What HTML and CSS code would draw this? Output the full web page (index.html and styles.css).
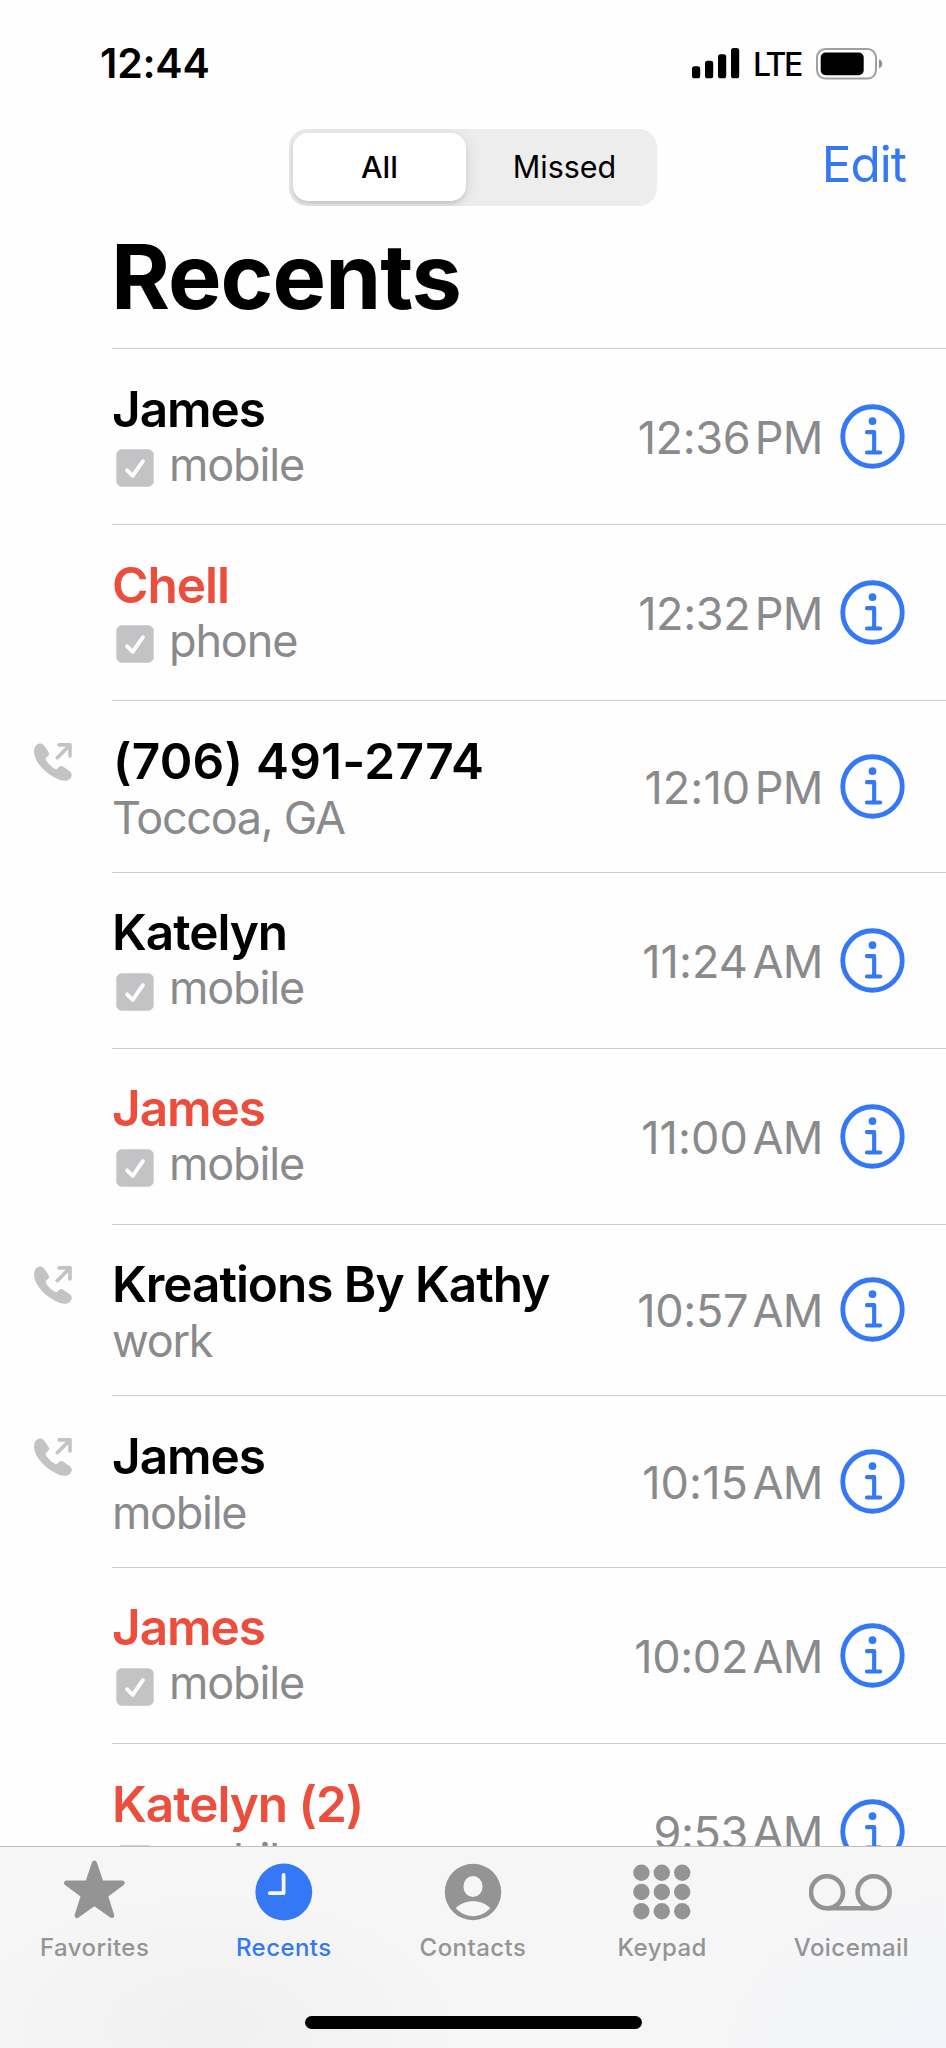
FILE: index.html
```
<!DOCTYPE html>
<html lang="en">
<head>
<meta charset="utf-8">
<title>Recents</title>
<link rel="stylesheet" href="styles.css">
</head>
<body>
<svg class="defs" aria-hidden="true">
  <symbol id="info" viewBox="0 0 66 66">
    <circle cx="33" cy="33" r="30.2" fill="none" stroke="currentColor" stroke-width="4.9"/>
    <circle cx="33" cy="17.4" r="3.9" fill="currentColor"/>
    <path d="M27.400 28.600H34.700V49.200M27.400 49.200H40.800" fill="none" stroke="currentColor" stroke-width="4.200" stroke-linecap="round" stroke-linejoin="round"/>
  </symbol>
  <symbol id="check" viewBox="0 0 38 38">
    <rect x="0.3" y="0.3" width="37.4" height="37.4" rx="5.5" fill="#c3c3c5"/>
    <path d="M11.2 21.3L16.7 26.8L26.9 12.2" fill="none" stroke="#fff" stroke-width="3.9" stroke-linecap="round" stroke-linejoin="round"/>
  </symbol>
  <symbol id="outgoing" viewBox="0 0 38 38">
    <path d="M2.2 2.2C4.6-.2 8-.1 10 2.4C12 5 13.8 7.500 14.900 9.700C15.900 12 13.300 13.300 12.100 14.800C11.300 16 12 17.200 13.200 18.900C15.100 21.300 17.500 23.700 19.900 25.300C21.500 26.400 22.700 26.500 23.800 25.300C25 24 26.400 22.300 28.700 23.500C31 24.700 33.500 26.500 35.800 28.300C38.200 30.300 38.400 33 36.400 35.400C34 37.800 30.500 38.300 26 37C19.500 34.500 12.800 30.200 8 25C3.800 20.300 1 15.500 .2 11C-.3 7.500 .3 4 2.200 2.200Z" fill="#c3c3c5"/>
    <path d="M25 1.900H36V13M36 1.900L23.300 14.700" fill="none" stroke="#c3c3c5" stroke-width="3.600" stroke-linecap="round" stroke-linejoin="round"/>
  </symbol>
</svg>

<div class="phone">
  <header class="status">
    <span class="clock">12:44</span>
    <div class="indicators">
      <svg width="48" height="31" viewBox="0 0 48 31">
        <rect x="0" y="18.300" width="8.200" height="12" rx="2.600"/>
        <rect x="13" y="12.800" width="8.200" height="17.500" rx="2.600"/>
        <rect x="26" y="6.300" width="8.200" height="24" rx="2.600"/>
        <rect x="39" y="0" width="8.200" height="30.300" rx="2.600"/>
      </svg>
      <span class="network">LTE</span>
      <svg class="battery" width="67" height="32" viewBox="0 0 67 32">
        <rect x="1" y="1" width="59" height="29.600" rx="8.500" fill="none" stroke="#a0a0a0" stroke-width="2"/>
        <rect x="4.700" y="4.500" width="43" height="22.700" rx="5"/>
        <path d="M63 11.200C67.300 12.600 67.300 19 63 20.400Z" fill="#8e8e8e"/>
      </svg>
    </div>
  </header>

  <nav class="toolbar">
    <div class="segmented">
      <button class="segment segment-on">All</button>
      <button class="segment segment-off">Missed</button>
    </div>
    <a class="edit">Edit</a>
  </nav>

  <h1 class="title">Recents</h1>

  <main class="calls">
    <article class="call">
      <div class="direction"></div>
      <div class="entry">
        <div class="who"><h2 class="name">James</h2><p class="detail"><svg class="box"><use href="#check"/></svg>mobile</p></div>
        <time class="time">12:36<span class="meridian">&#8239;PM</span></time><svg class="info"><use href="#info"/></svg>
      </div>
    </article>
    <article class="call">
      <div class="direction"></div>
      <div class="entry">
        <div class="who"><h2 class="name missed">Chell</h2><p class="detail"><svg class="box"><use href="#check"/></svg>phone</p></div>
        <time class="time">12:32<span class="meridian">&#8239;PM</span></time><svg class="info"><use href="#info"/></svg>
      </div>
    </article>
    <article class="call call-short">
      <div class="direction"><svg class="arrow"><use href="#outgoing"/></svg></div>
      <div class="entry">
        <div class="who"><h2 class="name number">(706) 491-2774</h2><p class="detail">Toccoa, GA</p></div>
        <time class="time time-wide">12:10<span class="meridian">&#8239;PM</span></time><svg class="info"><use href="#info"/></svg>
      </div>
    </article>
    <article class="call">
      <div class="direction"></div>
      <div class="entry">
        <div class="who"><h2 class="name">Katelyn</h2><p class="detail"><svg class="box"><use href="#check"/></svg>mobile</p></div>
        <time class="time time-wide">11:24<span class="meridian">&#8239;AM</span></time><svg class="info"><use href="#info"/></svg>
      </div>
    </article>
    <article class="call">
      <div class="direction"></div>
      <div class="entry">
        <div class="who"><h2 class="name missed">James</h2><p class="detail"><svg class="box"><use href="#check"/></svg>mobile</p></div>
        <time class="time time-wide">11:00<span class="meridian">&#8239;AM</span></time><svg class="info"><use href="#info"/></svg>
      </div>
    </article>
    <article class="call call-short">
      <div class="direction"><svg class="arrow"><use href="#outgoing"/></svg></div>
      <div class="entry">
        <div class="who"><h2 class="name">Kreations By Kathy</h2><p class="detail">work</p></div>
        <time class="time">10:57<span class="meridian">&#8239;AM</span></time><svg class="info"><use href="#info"/></svg>
      </div>
    </article>
    <article class="call call-short">
      <div class="direction"><svg class="arrow"><use href="#outgoing"/></svg></div>
      <div class="entry">
        <div class="who"><h2 class="name">James</h2><p class="detail">mobile</p></div>
        <time class="time time-wide">10:15<span class="meridian">&#8239;AM</span></time><svg class="info"><use href="#info"/></svg>
      </div>
    </article>
    <article class="call">
      <div class="direction"></div>
      <div class="entry">
        <div class="who"><h2 class="name missed">James</h2><p class="detail"><svg class="box"><use href="#check"/></svg>mobile</p></div>
        <time class="time">10:02<span class="meridian">&#8239;AM</span></time><svg class="info"><use href="#info"/></svg>
      </div>
    </article>
    <article class="call">
      <div class="direction"></div>
      <div class="entry">
        <div class="who"><h2 class="name missed">Katelyn (2)</h2><p class="detail"><svg class="box"><use href="#check"/></svg>mobile</p></div>
        <time class="time">9:53<span class="meridian">&#8239;AM</span></time><svg class="info"><use href="#info"/></svg>
      </div>
    </article>
  </main>

  <footer class="dock">
    <div class="tabs">
      <a class="tab">
        <svg width="84" height="64" viewBox="0 0 84 64">
          <path d="M41.400 5L48.200 25H69.200L52.400 37.500L58.700 57.500L41.400 45.300L24.100 57.500L30.400 37.500L13.600 25H34.600Z" fill="currentColor" stroke="currentColor" stroke-width="5" stroke-linejoin="round"/>
        </svg>
        <span>Favorites</span>
      </a>
      <a class="tab tab-on">
        <svg width="84" height="64" viewBox="0 0 84 64">
          <circle cx="41.800" cy="34" r="28.400" fill="currentColor"/>
          <path d="M41.600 17V35.200H27.800" fill="none" stroke="#f6f6f6" stroke-width="3.800" stroke-linecap="round" stroke-linejoin="round"/>
        </svg>
        <span>Recents</span>
      </a>
      <a class="tab">
        <svg width="84" height="64" viewBox="0 0 84 64">
          <circle cx="42" cy="34" r="28.200" fill="currentColor"/>
          <ellipse cx="42" cy="28.500" rx="9.600" ry="10.600" fill="#f6f6f6"/>
          <path d="M24.800 50.300C29 45.300 35 43.200 42 43.200S55 45.300 59.200 50.300C54.600 55.200 48.500 58.200 42 58.200S29.400 55.200 24.800 50.300Z" fill="#f6f6f6"/>
        </svg>
        <span>Contacts</span>
      </a>
      <a class="tab">
        <svg width="84" height="64" viewBox="0 0 84 64" fill="currentColor">
          <circle cx="21.400" cy="14.700" r="8.200"/><circle cx="41.800" cy="14.700" r="8.200"/><circle cx="62.200" cy="14.700" r="8.200"/>
          <circle cx="21.400" cy="34" r="8.200"/><circle cx="41.800" cy="34" r="8.200"/><circle cx="62.200" cy="34" r="8.200"/>
          <circle cx="21.400" cy="53.300" r="8.200"/><circle cx="41.800" cy="53.300" r="8.200"/><circle cx="62.200" cy="53.300" r="8.200"/>
        </svg>
        <span>Keypad</span>
      </a>
      <a class="tab">
        <svg width="84" height="64" viewBox="0 0 84 64" fill="none" stroke="currentColor" stroke-width="4.600">
          <circle cx="18" cy="34.300" r="16"/><circle cx="64.600" cy="34.300" r="16"/><path d="M18 50.300H64.600"/>
        </svg>
        <span>Voicemail</span>
      </a>
    </div>
    <div class="home"></div>
  </footer>
</div>
</body>
</html>
```
FILE: styles.css
```
* { box-sizing: border-box; margin: 0; padding: 0; }

body {
  background: #fefefe;
  color: #000;
  font-family: Inter, "Liberation Sans", sans-serif;
}

svg { display: block; flex: none; }
.defs { display: none; }

.phone {
  display: flex;
  flex-direction: column;
  width: 946px;
  height: 2048px;
  overflow: hidden;
}

/* Status bar */
.status {
  display: flex;
  justify-content: space-between;
  flex: none;
  height: 129px;
  padding: 38px 63px 0 100px;
}
.clock { font-size: 41px; font-weight: 560; line-height: 50px; letter-spacing: -.200px; }
.indicators { display: flex; height: 50px; padding-top: 10px; }
.network {
  width: 76px;
  padding-left: 13px;
  font-size: 32px;
  font-weight: 500;
  line-height: 34px;
  letter-spacing: -2.500px;
}

/* Toolbar */
.toolbar {
  display: grid;
  grid-template-columns: 1fr 368px 1fr;
  flex: none;
  height: 77px;
}
.segmented {
  display: grid;
  grid-template-columns: 173px 1fr;
  grid-column: 2;
  overflow: hidden;
  padding: 4px 4px 5px;
  border-radius: 18px;
  background: #ededee;
}
.segment {
  border: 0;
  border-radius: 15px;
  background: none;
  color: #000;
  font: 500 30.500px/68px Inter, "Liberation Sans", sans-serif;
}
.segment-on {
  background: #fff;
  box-shadow: 0 3px 3px rgba(0, 0, 0, .08), 0 3px 16px rgba(0, 0, 0, .12);
}
.segment-off { padding-left: 10px; font-weight: 440; }
.edit {
  padding-right: 40px;
  color: #3478f6;
  font-size: 49.500px;
  line-height: 71px;
  letter-spacing: -1px;
  text-align: right;
}

.title {
  flex: none;
  height: 142px;
  padding-left: 111px;
  font-size: 90px;
  font-weight: 700;
  line-height: 142px;
  letter-spacing: -1px;
}

/* Call list */
.calls { flex: 1; min-height: 0; overflow: hidden; }
.call { display: grid; grid-template-columns: 112px 1fr; height: 176px; }
.call-short { height: 171.500px; }
.direction { padding: 42.500px 0 0 34px; }
.arrow { width: 38px; height: 38px; }
.entry {
  display: flex;
  align-items: center;
  padding-right: 41px;
  border-top: 1px solid #c9c9cb;
}
.who { flex: 1; align-self: flex-start; padding-top: 31.500px; }
.call:last-child .who { padding-top: 32.500px; }
.name {
  font-size: 49.500px;
  font-weight: 600;
  line-height: 57px;
  letter-spacing: -1.020px;
  white-space: nowrap;
}
.number { padding-left: 1px; letter-spacing: .250px; }
.missed { color: #eb4e3d; }
.detail {
  display: flex;
  color: #8a8a8d;
  font-size: 45px;
  line-height: 54px;
  letter-spacing: -1.150px;
}
.call-short .detail { line-height: 55px; letter-spacing: -1.300px; }
.box { width: 38px; height: 38px; margin: 11.500px 15px 0 4px; }
.time {
  padding-top: 3px;
  color: #8a8a8d;
  font-size: 45px;
  line-height: 54px;
  letter-spacing: -.350px;
  white-space: nowrap;
}
.time-wide { letter-spacing: .100px; }
.meridian { margin-left: -3px; letter-spacing: -.800px; }
.info { width: 65px; height: 65px; margin-left: 17.500px; color: #3478f6; }

/* Tab bar */
.dock {
  display: flex;
  flex-direction: column;
  justify-content: space-between;
  align-items: center;
  flex: none;
  height: 202px;
  padding-bottom: 19px;
  border-top: 1px solid #bebebf;
  background:
    radial-gradient(ellipse 260px 140px at 210px 180px, rgba(0, 0, 0, .025), transparent),
    radial-gradient(ellipse 260px 180px at 946px 202px, #f3f5fb, transparent),
    #f6f6f6;
}
.tabs { display: grid; grid-template-columns: repeat(5, 1fr); width: 100%; padding-top: 11px; }
.tab {
  display: flex;
  flex-direction: column;
  align-items: center;
  color: #949494;
  font-size: 24px;
  font-weight: 500;
  line-height: 30px;
  letter-spacing: .450px;
}
.tab span { margin-top: 11px; }
.tab-on { color: #3478f6; }
.home { width: 337px; height: 13px; border-radius: 7px; background: #000; }
```
